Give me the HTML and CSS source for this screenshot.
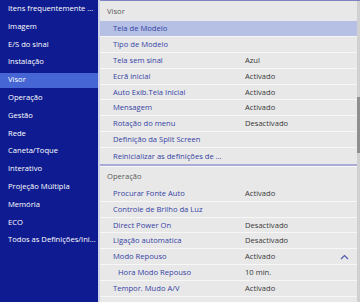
FILE: index.html
```html
<!DOCTYPE html>
<html>
<head>
<meta charset="utf-8">
<link rel="stylesheet" href="styles.css">
</head>
<body>
<div class="screen">
  <nav class="side">
    <div class="side-item">Itens frequentemente ...</div>
    <div class="side-item">Imagem</div>
    <div class="side-item">E/S do sinal</div>
    <div class="side-item">Instalação</div>
    <div class="side-item selected">Visor</div>
    <div class="side-item">Operação</div>
    <div class="side-item">Gestão</div>
    <div class="side-item">Rede</div>
    <div class="side-item">Caneta/Toque</div>
    <div class="side-item">Interativo</div>
    <div class="side-item">Projeção Múltipla</div>
    <div class="side-item">Memória</div>
    <div class="side-item">ECO</div>
    <div class="side-item">Todos as Definições/Ini...</div>
  </nav>
  <main class="panel">
    <div class="list">
      <div class="head first">Visor</div>
      <div class="row active"><span class="label">Tela de Modelo</span><span class="value"></span></div>
      <div class="row"><span class="label">Tipo de Modelo</span><span class="value"></span></div>
      <div class="row"><span class="label">Tela sem sinal</span><span class="value">Azul</span></div>
      <div class="row"><span class="label">Ecrã inicial</span><span class="value">Activado</span></div>
      <div class="row"><span class="label">Auto Exib.Tela Inicial</span><span class="value">Activado</span></div>
      <div class="row"><span class="label">Mensagem</span><span class="value">Activado</span></div>
      <div class="row"><span class="label">Rotação do menu</span><span class="value">Desactivado</span></div>
      <div class="row"><span class="label">Definição da Split Screen</span><span class="value"></span></div>
      <div class="row last"><span class="label">Reinicializar as definições de ...</span><span class="value"></span></div>
      <div class="divider"></div>
      <div class="head">Operação</div>
      <div class="row"><span class="label">Procurar Fonte Auto</span><span class="value">Activado</span></div>
      <div class="row"><span class="label">Controle de Brilho da Luz</span><span class="value"></span></div>
      <div class="row"><span class="label">Direct Power On</span><span class="value">Desactivado</span></div>
      <div class="row"><span class="label">Ligação automatica</span><span class="value">Desactivado</span></div>
      <div class="row"><span class="label">Modo Repouso</span><span class="value">Activado</span><svg class="chev" width="9" height="6" viewBox="0 0 9 6"><path d="M1 5 L4.5 1.5 L8 5" fill="none" stroke="#4a58b0" stroke-width="1.2"/></svg></div>
      <div class="row sub"><span class="label">Hora Modo Repouso</span><span class="value">10 min.</span></div>
      <div class="row"><span class="label">Tempor. Mudo A/V</span><span class="value">Activado</span></div>
      <div class="row"><span class="label">Modo de espera</span><span class="value">Comunic. Activada</span></div>
    </div>
    <div class="scrollbar"><div class="thumb"></div></div>
  </main>
</div>
</body>
</html>
```

FILE: styles.css
```css
* { box-sizing: border-box; }
html, body { margin: 0; padding: 0; }
body {
  width: 360px;
  height: 302px;
  overflow: hidden;
  font-family: "Open Sans", "Noto Sans", sans-serif;
  font-size: 7.6px;
}
.screen {
  display: flex;
  width: 360px;
  height: 302px;
  overflow: hidden;
}
.side {
  width: 100px;
  flex: none;
  background: #0f1c91;
  border-right: 2px solid #cfd3ea;
  display: flex;
  flex-direction: column;
}
.side-item {
  height: 17.8px;
  line-height: 17.8px;
  padding-left: 8px;
  color: #ffffff;
  white-space: nowrap;
  overflow: hidden;
}
.side-item.selected {
  background: #4566d4;
  box-shadow: inset 0 2px 0 #0f1c91, inset 0 -1px 0 #0f1c91;
}
.panel {
  flex: 1;
  position: relative;
  background: #e8e8e8;
  border-top: 1px solid #7d83bf;
  overflow: hidden;
}
.list {
  margin-right: 3px;
  display: flex;
  flex-direction: column;
}
.head {
  height: 18.8px;
  line-height: 18.8px;
  padding-left: 7px;
  color: #5a5a5a;
}
.head.first {
  height: 20px;
  line-height: 20px;
}
.row {
  height: 15.9px;
  line-height: 15px;
  display: flex;
  align-items: center;
  border-bottom: 1px solid #f7f7f7;
  padding-left: 13px;
  white-space: nowrap;
}
.row.last { border-bottom: none; }
.row.active { background: #b5c0e4; }
.row.sub { padding-left: 18px; }
.label {
  color: #3443a4;
  width: 132px;
  flex: none;
}
.row.sub .label { width: 127px; }
.value {
  color: #383838;
  flex: 1;
}
.chev {
  margin-right: 8px;
  flex: none;
}
.divider {
  height: 3px;
  background: #aaaad8;
  border-bottom: 1px solid #f7f7f7;
}
.scrollbar {
  position: absolute;
  right: 0;
  top: 0;
  bottom: 0;
  width: 3px;
  background: #d0d0d0;
}
.thumb {
  margin-top: 96px;
  height: 56px;
  background: #8f8f8f;
}
```
